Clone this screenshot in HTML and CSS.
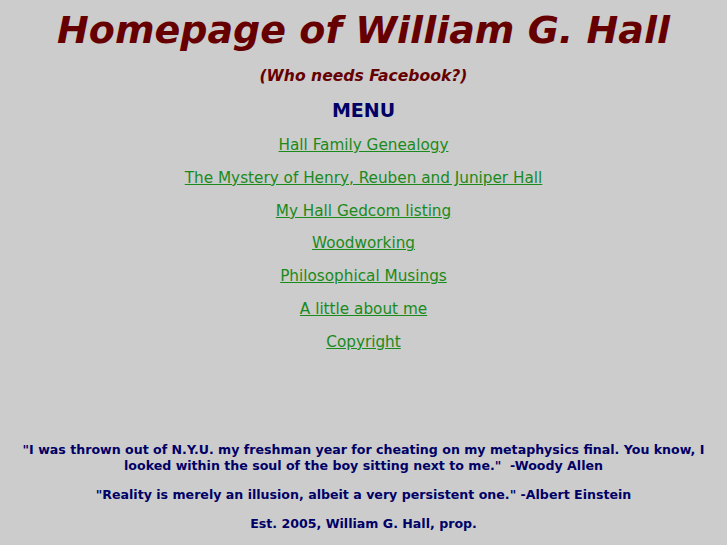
FILE: index.html
```html
<!DOCTYPE html>
<html>
<head>
<meta charset="utf-8">
<link rel="stylesheet" href="styles.css">
</head>
<body>
<h1 class="title">Homepage of William G. Hall</h1>
<p class="subtitle">(Who needs Facebook?)</p>
<h2 class="menu-head">MENU</h2>
<nav class="menu">
<a href="#">Hall Family Genealogy</a>
<a href="#">The Mystery of Henry, Reuben and Juniper Hall</a>
<a href="#">My Hall Gedcom listing</a>
<a href="#">Woodworking</a>
<a href="#">Philosophical Musings</a>
<a href="#">A little about me</a>
<a href="#">Copyright</a>
</nav>
<footer class="foot">
<p class="quote">"I was thrown out of N.Y.U. my freshman year for cheating on my metaphysics final. You know, I looked within the soul of the boy sitting next to me."&nbsp; -Woody Allen</p>
<p class="quote">"Reality is merely an illusion, albeit a very persistent one." -Albert Einstein</p>
<p class="quote">Est. 2005, William G. Hall, prop.</p>
</footer>
</body>
</html>
```
FILE: styles.css
```css
html, body {
  margin: 0;
  padding: 0;
  background: #cccccc;
}
body {
  font-family: "DejaVu Sans", Verdana, sans-serif;
  text-align: center;
  padding: 0 8px;
}
.title {
  margin: 0;
  padding-top: 8px;
  font-size: 38px;
  line-height: 44px;
  font-style: italic;
  font-weight: bold;
  color: #660000;
}
.subtitle {
  margin: 14px 0 0;
  font-size: 15.6px;
  line-height: 20px;
  font-style: italic;
  font-weight: bold;
  color: #660000;
}
.menu-head {
  margin: 12px 0 0;
  font-size: 19px;
  line-height: 24px;
  font-weight: bold;
  color: #000066;
}
.menu {
  display: flex;
  flex-direction: column;
  align-items: center;
  gap: 12.8px;
  margin-top: 13px;
}
.menu a {
  font-size: 15.25px;
  line-height: 20px;
  color: #1a8a1a;
}
.foot {
  margin-top: 90px;
}
.quote {
  margin: 0 0 13px;
  font-size: 12.6px;
  line-height: 16px;
  font-weight: bold;
  color: #000066;
}
```
